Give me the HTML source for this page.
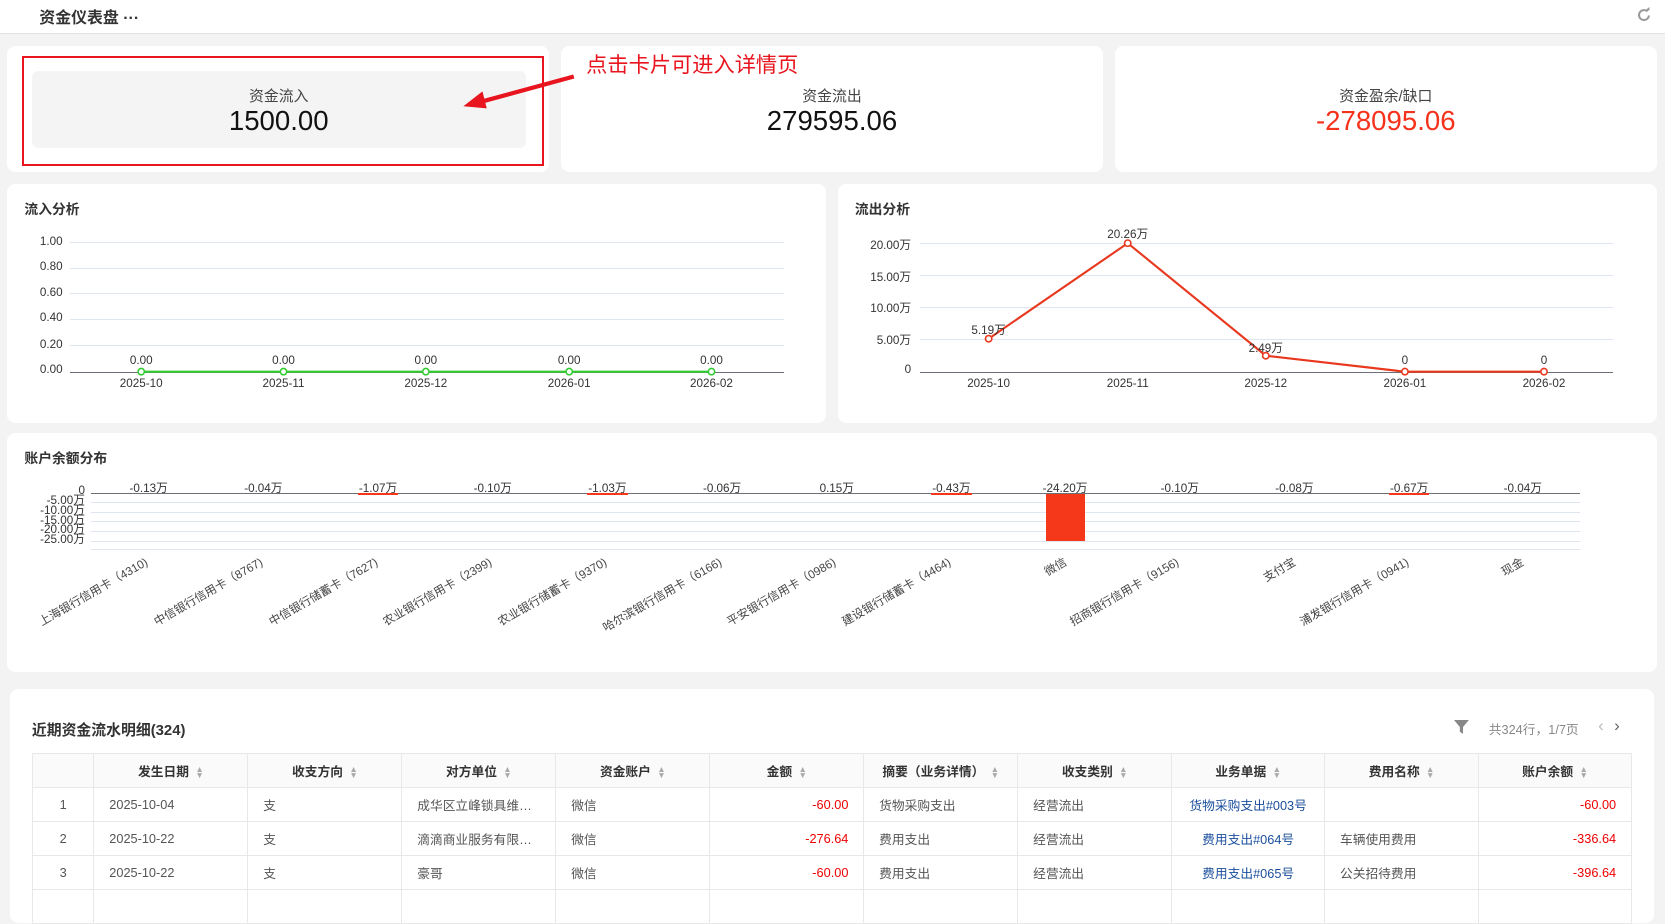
<!DOCTYPE html>
<html><head><meta charset="utf-8">
<style>
*{box-sizing:border-box;margin:0;padding:0}
html,body{width:1665px;height:891px;overflow:hidden;background:#f3f3f3}
#w{position:absolute;left:0;top:0;width:1568px;height:839px;zoom:1.0619;font-family:"Liberation Sans","Noto Sans CJK SC",sans-serif;color:#333}
.a{position:absolute}
.card{position:absolute;background:#fff;border-radius:8px}
.t{position:absolute;font-size:13px;font-weight:bold;color:#333}
.sm{position:absolute;font-size:11px;color:#333;white-space:nowrap}
.gl{position:absolute;height:1px;background:#e0e6f1}
table{border-collapse:collapse;position:absolute;left:30px;top:709px;width:1506px;font-size:12px;table-layout:fixed}
td,th{border:1px solid #e8e8e8;height:32px;padding:0 14px;white-space:nowrap;overflow:hidden;text-overflow:ellipsis;color:#555;font-weight:normal;background:#fff}
th{background:#fafafa;color:#333;font-weight:bold;text-align:center}
th .s{display:inline-block;margin-left:6px;font-size:8px;color:#aaa;line-height:5px;vertical-align:middle}
.r{text-align:right;color:#e00}
.b{color:#1a4e9c;text-align:center}
.rl{position:absolute;top:520px;width:200px;text-align:right;transform-origin:100% 50%;transform:rotate(-30deg)}
</style></head><body><div id="w">
<div class="a" style="left:0;top:0;width:1568px;height:32px;background:#fff;border-bottom:1px solid #e2e2e2"></div>
<div class="a" style="left:37px;top:5px;font-size:15px;font-weight:bold;color:#333">资金仪表盘 ···</div>
<svg class="a" style="left:1541px;top:7px" width="15" height="15" viewBox="0 0 16 16"><path d="M13 8.5A5 5 0 1 1 11.5 4.5" fill="none" stroke="#999" stroke-width="2"/><path d="M9 3.5h4.5V0z" fill="#999"/></svg>

<div class="card" style="left:7px;top:43px;width:510px;height:119px"></div>
<div class="card" style="left:528px;top:43px;width:511px;height:119px"></div>
<div class="card" style="left:1050px;top:43px;width:510px;height:119px"></div>
<div class="a" style="left:30px;top:67px;width:465px;height:72px;background:#f4f4f4;border-radius:6px"></div>
<div class="a" style="left:21px;top:53px;width:491px;height:103px;border:2px solid #e8141e"></div>
<div class="a" style="left:30px;top:80px;width:465px;text-align:center;font-size:14px;color:#444">资金流入</div>
<div class="a" style="left:30px;top:99px;width:465px;text-align:center;font-size:26px;color:#111">1500.00</div>
<div class="a" style="left:528px;top:80px;width:511px;text-align:center;font-size:14px;color:#444">资金流出</div>
<div class="a" style="left:528px;top:99px;width:511px;text-align:center;font-size:26px;color:#111">279595.06</div>
<div class="a" style="left:1050px;top:80px;width:510px;text-align:center;font-size:14px;color:#444">资金盈余/缺口</div>
<div class="a" style="left:1050px;top:99px;width:510px;text-align:center;font-size:26px;color:#f5321c">-278095.06</div>
<div class="a" style="left:552px;top:45px;font-size:20px;color:#e8141e">点击卡片可进入详情页</div>
<svg class="a" style="left:430px;top:64px" width="120" height="44"><line x1="110" y1="8" x2="22" y2="32" stroke="#e8141e" stroke-width="4"/><path d="M6 36 L24 22 L28 38z" fill="#e8141e"/></svg>

<div class="card" style="left:7px;top:173px;width:771px;height:225px"></div>
<div class="card" style="left:789px;top:173px;width:771px;height:225px"></div>
<div class="t" style="left:23px;top:186px">流入分析</div>
<div class="t" style="left:805px;top:186px">流出分析</div>
<div class="gl" style="left:66px;top:228px;width:672px"></div>
<div class="gl" style="left:66px;top:252px;width:672px"></div>
<div class="gl" style="left:66px;top:276px;width:672px"></div>
<div class="gl" style="left:66px;top:300px;width:672px"></div>
<div class="gl" style="left:66px;top:325px;width:672px"></div>
<div class="a" style="left:66px;top:350px;width:672px;height:1px;background:#6e7079"></div>
<div class="sm" style="left:20px;top:221px;width:39px;text-align:right">1.00</div>
<div class="sm" style="left:20px;top:245px;width:39px;text-align:right">0.80</div>
<div class="sm" style="left:20px;top:269px;width:39px;text-align:right">0.60</div>
<div class="sm" style="left:20px;top:293px;width:39px;text-align:right">0.40</div>
<div class="sm" style="left:20px;top:318px;width:39px;text-align:right">0.20</div>
<div class="sm" style="left:20px;top:342px;width:39px;text-align:right">0.00</div>
<svg class="a" style="left:0;top:0" width="780" height="400"><line x1="133" y1="350" x2="670" y2="350" stroke="#3c3" stroke-width="2"/><g fill="#fff" stroke="#3c3" stroke-width="1.5"><circle cx="133" cy="350" r="3"/><circle cx="267" cy="350" r="3"/><circle cx="401" cy="350" r="3"/><circle cx="536" cy="350" r="3"/><circle cx="670" cy="350" r="3"/></g></svg>
<div class="sm" style="left:113px;top:333px;width:40px;text-align:center">0.00</div>
<div class="sm" style="left:247px;top:333px;width:40px;text-align:center">0.00</div>
<div class="sm" style="left:381px;top:333px;width:40px;text-align:center">0.00</div>
<div class="sm" style="left:516px;top:333px;width:40px;text-align:center">0.00</div>
<div class="sm" style="left:650px;top:333px;width:40px;text-align:center">0.00</div>
<div class="sm" style="left:103px;top:355px;width:60px;text-align:center">2025-10</div>
<div class="sm" style="left:237px;top:355px;width:60px;text-align:center">2025-11</div>
<div class="sm" style="left:371px;top:355px;width:60px;text-align:center">2025-12</div>
<div class="sm" style="left:506px;top:355px;width:60px;text-align:center">2026-01</div>
<div class="sm" style="left:640px;top:355px;width:60px;text-align:center">2026-02</div>
<div class="gl" style="left:866px;top:229px;width:653px"></div>
<div class="gl" style="left:866px;top:259px;width:653px"></div>
<div class="gl" style="left:866px;top:289px;width:653px"></div>
<div class="gl" style="left:866px;top:319px;width:653px"></div>
<div class="a" style="left:866px;top:350px;width:653px;height:1px;background:#6e7079"></div>
<div class="sm" style="left:800px;top:222px;width:58px;text-align:right">20.00万</div>
<div class="sm" style="left:800px;top:252px;width:58px;text-align:right">15.00万</div>
<div class="sm" style="left:800px;top:282px;width:58px;text-align:right">10.00万</div>
<div class="sm" style="left:800px;top:312px;width:58px;text-align:right">5.00万</div>
<div class="sm" style="left:800px;top:342px;width:58px;text-align:right">0</div>
<svg class="a" style="left:0;top:0" width="1568" height="400"><polyline points="931,319 1062,229 1192,335 1323,350 1454,350" fill="none" stroke="#e8381e" stroke-width="2"/><g fill="#fff" stroke="#e8381e" stroke-width="1.5"><circle cx="931" cy="319" r="3"/><circle cx="1062" cy="229" r="3"/><circle cx="1192" cy="335" r="3"/><circle cx="1323" cy="350" r="3"/><circle cx="1454" cy="350" r="3"/></g></svg>
<div class="sm" style="left:901px;top:302px;width:60px;text-align:center">5.19万</div>
<div class="sm" style="left:1032px;top:212px;width:60px;text-align:center">20.26万</div>
<div class="sm" style="left:1162px;top:319px;width:60px;text-align:center">2.49万</div>
<div class="sm" style="left:1293px;top:333px;width:60px;text-align:center">0</div>
<div class="sm" style="left:1424px;top:333px;width:60px;text-align:center">0</div>
<div class="sm" style="left:901px;top:355px;width:60px;text-align:center">2025-10</div>
<div class="sm" style="left:1032px;top:355px;width:60px;text-align:center">2025-11</div>
<div class="sm" style="left:1162px;top:355px;width:60px;text-align:center">2025-12</div>
<div class="sm" style="left:1293px;top:355px;width:60px;text-align:center">2026-01</div>
<div class="sm" style="left:1424px;top:355px;width:60px;text-align:center">2026-02</div>

<div class="card" style="left:7px;top:408px;width:1553px;height:225px"></div>
<div class="t" style="left:23px;top:421px">账户余额分布</div>
<div class="gl" style="left:86px;top:473px;width:1402px"></div>
<div class="gl" style="left:86px;top:482px;width:1402px"></div>
<div class="gl" style="left:86px;top:491px;width:1402px"></div>
<div class="gl" style="left:86px;top:500px;width:1402px"></div>
<div class="gl" style="left:86px;top:509px;width:1402px"></div>
<div class="gl" style="left:86px;top:517px;width:1402px"></div>
<div class="a" style="left:86px;top:464px;width:1402px;height:1px;background:#6e7079"></div>
<div class="a" style="left:20px;top:458px;width:60px;text-align:right;font-size:11px;line-height:9.2px">0<br>-5.00万<br>-10.00万<br>-15.00万<br>-20.00万<br>-25.00万</div>
<div class="a" style="left:985px;top:465px;width:37px;height:44px;background:#f5381a"></div>
<div class="a" style="left:337px;top:464px;width:38px;height:2px;background:#f5381a"></div>
<div class="a" style="left:553px;top:464px;width:38px;height:2px;background:#f5381a"></div>
<div class="a" style="left:877px;top:464px;width:38px;height:2px;background:#f5381a"></div>
<div class="a" style="left:1308px;top:464px;width:38px;height:2px;background:#f5381a"></div>
<div class="sm" style="left:110px;top:451px;width:60px;text-align:center">-0.13万</div>
<div class="sm" style="left:218px;top:451px;width:60px;text-align:center">-0.04万</div>
<div class="sm" style="left:326px;top:451px;width:60px;text-align:center">-1.07万</div>
<div class="sm" style="left:434px;top:451px;width:60px;text-align:center">-0.10万</div>
<div class="sm" style="left:542px;top:451px;width:60px;text-align:center">-1.03万</div>
<div class="sm" style="left:650px;top:451px;width:60px;text-align:center">-0.06万</div>
<div class="sm" style="left:758px;top:451px;width:60px;text-align:center">0.15万</div>
<div class="sm" style="left:866px;top:451px;width:60px;text-align:center">-0.43万</div>
<div class="sm" style="left:973px;top:451px;width:60px;text-align:center">-24.20万</div>
<div class="sm" style="left:1081px;top:451px;width:60px;text-align:center">-0.10万</div>
<div class="sm" style="left:1189px;top:451px;width:60px;text-align:center">-0.08万</div>
<div class="sm" style="left:1297px;top:451px;width:60px;text-align:center">-0.67万</div>
<div class="sm" style="left:1404px;top:451px;width:60px;text-align:center">-0.04万</div>
<div style="position:absolute;left:0;top:0;font-size:11px;color:#444">
<div class="rl" style="left:-62px">上海银行信用卡（4310)</div>
<div class="rl" style="left:46px">中信银行信用卡（8767)</div>
<div class="rl" style="left:154px">中信银行储蓄卡（7627)</div>
<div class="rl" style="left:262px">农业银行信用卡（2399)</div>
<div class="rl" style="left:370px">农业银行储蓄卡（9370)</div>
<div class="rl" style="left:478px">哈尔滨银行信用卡（6166)</div>
<div class="rl" style="left:586px">平安银行信用卡（0986)</div>
<div class="rl" style="left:694px">建设银行储蓄卡（4464)</div>
<div class="rl" style="left:803px">微信</div>
<div class="rl" style="left:909px">招商银行信用卡（9156)</div>
<div class="rl" style="left:1019px">支付宝</div>
<div class="rl" style="left:1125px">浦发银行信用卡（0941)</div>
<div class="rl" style="left:1234px">现金</div>
</div>

<div class="card" style="left:9px;top:649px;width:1549px;height:220px"></div>
<div class="a" style="left:30px;top:677px;font-size:14px;font-weight:bold;color:#333">近期资金流水明细(324)</div>
<svg class="a" style="left:1369px;top:677px" width="14" height="14"><path d="M0 1h14L8.5 7.5V14L5.5 12V7.5z" fill="#888"/></svg>
<div class="a" style="left:1402px;top:677px;font-size:12px;color:#888">共324行，1/7页</div>
<div class="a" style="left:1505px;top:674px;font-size:16px;color:#bbb">‹</div>
<div class="a" style="left:1520px;top:674px;font-size:16px;color:#666">›</div>
<table>
<colgroup><col style="width:58px"><col style="width:145px"><col style="width:145px"><col style="width:145px"><col style="width:145px"><col style="width:145px"><col style="width:145px"><col style="width:145px"><col style="width:144px"><col style="width:145px"><col style="width:144px"></colgroup>
<tr><th></th><th>发生日期<span class="s">▲<br>▼</span></th><th>收支方向<span class="s">▲<br>▼</span></th><th>对方单位<span class="s">▲<br>▼</span></th><th>资金账户<span class="s">▲<br>▼</span></th><th>金额<span class="s">▲<br>▼</span></th><th>摘要（业务详情）<span class="s">▲<br>▼</span></th><th>收支类别<span class="s">▲<br>▼</span></th><th>业务单据<span class="s">▲<br>▼</span></th><th>费用名称<span class="s">▲<br>▼</span></th><th>账户余额<span class="s">▲<br>▼</span></th></tr>
<tr><td style="text-align:center">1</td><td>2025-10-04</td><td>支</td><td>成华区立峰锁具维修服务部</td><td>微信</td><td class="r">-60.00</td><td>货物采购支出</td><td>经营流出</td><td class="b">货物采购支出#003号</td><td></td><td class="r">-60.00</td></tr>
<tr><td style="text-align:center">2</td><td>2025-10-22</td><td>支</td><td>滴滴商业服务有限公司</td><td>微信</td><td class="r">-276.64</td><td>费用支出</td><td>经营流出</td><td class="b">费用支出#064号</td><td>车辆使用费用</td><td class="r">-336.64</td></tr>
<tr><td style="text-align:center">3</td><td>2025-10-22</td><td>支</td><td>豪哥</td><td>微信</td><td class="r">-60.00</td><td>费用支出</td><td>经营流出</td><td class="b">费用支出#065号</td><td>公关招待费用</td><td class="r">-396.64</td></tr>
<tr><td></td><td></td><td></td><td></td><td></td><td></td><td></td><td></td><td></td><td></td><td></td></tr>
</table>
</div></body></html>
